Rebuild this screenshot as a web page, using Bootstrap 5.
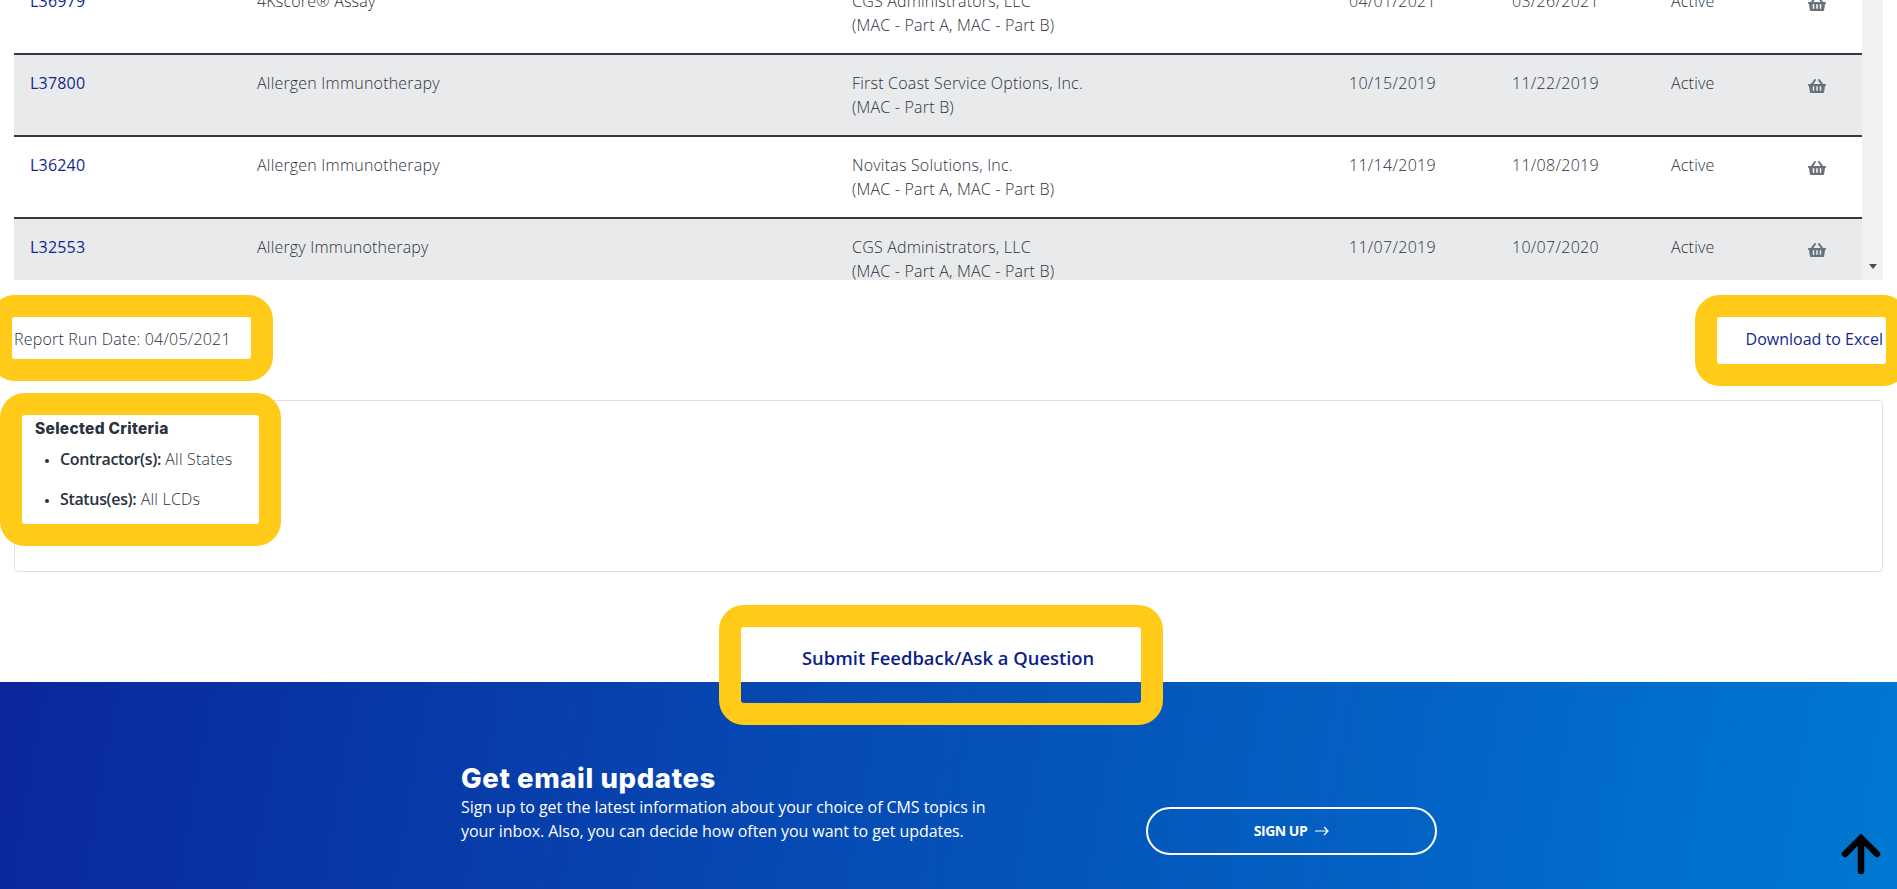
<!DOCTYPE html>
<html lang="en">
<head>
<meta charset="utf-8">
<title>LCD report</title>
<link href="https://cdn.jsdelivr.net/npm/bootstrap@5.3.0/dist/css/bootstrap.min.css" rel="stylesheet">
<style>
html, body { height: 889px; overflow: hidden; }
body { font-family: "Open Sans", "Liberation Sans", sans-serif; font-size: 16px; font-weight: 300; letter-spacing: .2px; line-height: 24px; color: #2b323d; background: #fff; }
a { text-decoration: none; color: #13278f; font-weight: 400; letter-spacing: 0; }
.hl { position: relative; z-index: 2; }
.hl::before { content: ""; position: absolute; inset: -22px; border: 22px solid #ffca18; border-radius: 25px; pointer-events: none; }
.scroll-wrap { height: 280px; margin: 0 14px; overflow: hidden; }
.scroll-body { flex: 1 1 auto; overflow: hidden; }
.rep-table { table-layout: fixed; width: 1848px; margin: -27px 0 0; --bs-table-color: #2b323d; --bs-table-bg: transparent; border-collapse: separate; border-spacing: 0; }
.rep-table td { padding: 16px; border: 0; border-bottom: 2px solid #343a40; line-height: 24px; height: 82px; vertical-align: top; font-weight: 300; }
.rep-table tr.grey td { background: #e9eaec; }
.c1 { width: 227px; } .c2 { width: 595px; } .c3 { width: 497px; } .c4 { width: 163px; } .c5 { width: 159px; } .c6 { width: 137px; } .c7 { width: 70px; }
.rep-table td.nums { letter-spacing: .3px; }
.rep-table td.nums a { letter-spacing: .2px; }
.basket { width: 18px; height: 16px; fill: #68727b; display: block; margin-top: 7px; }
.fake-bar { width: 21px; background: #f1f1f1; }
.fake-arrow { width: 0; height: 0; border-left: 4px solid transparent; border-right: 4px solid transparent; border-top: 5px solid #4d4a50; margin-bottom: 11px; }
.run-row { margin: 37px 11px 0 12px; height: 47px; }
.run-date { width: 239px; height: 42px; padding: 10px 2px; }
.dl-box { width: 169px; height: 47px; padding: 10px 3px 0 0; text-align: right; }
.crit-card { margin: 36px 14px 0 14px; height: 172px; border: 1px solid #dfe0e2; border-radius: 4px; padding: 14px 0 0 7px; }
.crit-box { width: 237px; height: 109px; padding: 2px 0 0 13px; }
.crit-title { font-weight: 800; font-size: 15.5px; letter-spacing: .3px; line-height: 24px; color: #2b3240; font-family: "Inter", sans-serif; }
.crit-list { margin: 6px 0 0; padding-left: 25px; }
.crit-list li { line-height: 24px; margin-bottom: 16px; }
.crit-list li::marker { font-size: 12px; }
.crit-list strong { font-weight: 600; letter-spacing: -.35px; }
.submit-wrap { margin-top: 55px; margin-bottom: -21px; padding-right: 15px; }
.submit-box { width: 400px; height: 76px; padding: 19px 0 0 61px; font-size: 18.4px; font-weight: 600; letter-spacing: 0; color: #0d1f87; line-height: 24px; }
.foot { height: 207px; background: linear-gradient(100deg, #0a279b 0%, #0078d2 100%); color: #fff; position: relative; padding: 79px 0 0 461px; }
.foot-title { font-family: "Inter", sans-serif; font-weight: 800; font-size: 27.5px; letter-spacing: .6px; line-height: 34px; margin: 0; }
.foot-text { width: 535px; margin: 0; color: #fff; font-weight: 400; letter-spacing: -.07px; }
.signup { width: 291px; height: 48px; margin-left: 150px; margin-bottom: -12px; border: 2px solid #fff; border-radius: 24px; color: #fff; font-size: 14px; font-weight: 700; letter-spacing: -.5px; }
.signup:hover { color: #fff; }
.to-top { position: absolute; right: 14px; bottom: 13px; width: 42px; height: 43px; }
</style>
</head>
<body>
<div class="scroll-wrap d-flex">
  <div class="scroll-body">
    <table class="table rep-table">
      <colgroup><col class="c1"><col class="c2"><col class="c3"><col class="c4"><col class="c5"><col class="c6"><col class="c7"></colgroup>
      <tbody>
        <tr><td class="nums"><a href="#">L36979</a></td><td>4Kscore® Assay</td><td>CGS Administrators, LLC<br>(MAC - Part A, MAC - Part B)</td><td class="nums">04/01/2021</td><td class="nums">03/26/2021</td><td>Active</td><td><svg class="basket" viewBox="0 0 576 512"><use href="#bk"/></svg></td></tr>
        <tr class="grey"><td class="nums"><a href="#">L37800</a></td><td>Allergen Immunotherapy</td><td>First Coast Service Options, Inc.<br>(MAC - Part B)</td><td class="nums">10/15/2019</td><td class="nums">11/22/2019</td><td>Active</td><td><svg class="basket" viewBox="0 0 576 512"><use href="#bk"/></svg></td></tr>
        <tr><td class="nums"><a href="#">L36240</a></td><td>Allergen Immunotherapy</td><td>Novitas Solutions, Inc.<br>(MAC - Part A, MAC - Part B)</td><td class="nums">11/14/2019</td><td class="nums">11/08/2019</td><td>Active</td><td><svg class="basket" viewBox="0 0 576 512"><use href="#bk"/></svg></td></tr>
        <tr class="grey"><td class="nums"><a href="#">L32553</a></td><td>Allergy Immunotherapy</td><td>CGS Administrators, LLC<br>(MAC - Part A, MAC - Part B)</td><td class="nums">11/07/2019</td><td class="nums">10/07/2020</td><td>Active</td><td><svg class="basket" viewBox="0 0 576 512"><use href="#bk"/></svg></td></tr>
      </tbody>
    </table>
  </div>
  <div class="fake-bar d-flex flex-column justify-content-end align-items-center"><div class="fake-arrow"></div></div>
</div>

<svg width="0" height="0" class="position-absolute"><defs><path id="bk" d="M576 216v16c0 13.255-10.745 24-24 24h-8l-26.113 182.788C514.509 462.435 494.257 480 470.37 480H105.63c-23.887 0-44.139-17.565-47.518-41.212L32 256h-8c-13.255 0-24-10.745-24-24v-16c0-13.255 10.745-24 24-24h67.341l106.78-146.821c10.395-14.292 30.407-17.453 44.701-7.058 14.293 10.395 17.453 30.408 7.058 44.701L170.477 192h235.046L326.12 82.821c-10.395-14.292-7.234-34.306 7.059-44.701 14.291-10.395 34.306-7.235 44.701 7.058L484.659 192H552c13.255 0 24 10.745 24 24zM312 392V280c0-13.255-10.745-24-24-24s-24 10.745-24 24v112c0 13.255 10.745 24 24 24s24-10.745 24-24zm112 0V280c0-13.255-10.745-24-24-24s-24 10.745-24 24v112c0 13.255 10.745 24 24 24s24-10.745 24-24zm-224 0V280c0-13.255-10.745-24-24-24s-24 10.745-24 24v112c0 13.255 10.745 24 24 24s24-10.745 24-24z"/></defs></svg>

<div class="run-row d-flex justify-content-between align-items-start">
  <div class="run-date hl">Report Run Date: 04/05/2021</div>
  <div class="dl-box hl"><a href="#">Download to Excel</a></div>
</div>

<div class="crit-card">
  <div class="crit-box hl">
    <div class="crit-title">Selected Criteria</div>
    <ul class="crit-list">
      <li><strong>Contractor(s):</strong> All States</li>
      <li><strong>Status(es):</strong> All LCDs</li>
    </ul>
  </div>
</div>

<div class="submit-wrap d-flex justify-content-center position-relative">
  <div class="submit-box hl">Submit Feedback/Ask a Question</div>
</div>

<footer class="foot">
  <div class="d-flex align-items-end">
    <div>
      <h2 class="foot-title">Get email updates</h2>
      <p class="foot-text">Sign up to get the latest information about your choice of CMS topics in your inbox. Also, you can decide how often you want to get updates.</p>
    </div>
    <a class="signup d-flex align-items-center justify-content-center gap-2" href="#">SIGN UP
      <svg width="14" height="10" viewBox="0 0 14 10" fill="none" stroke="#fff" stroke-width="1.2"><path d="M0 5h13M9 1l4 4-4 4"/></svg></a>
  </div>
  <svg class="to-top" viewBox="0 0 42 43" fill="none" stroke="#000" stroke-width="6.5" stroke-linecap="round" stroke-linejoin="miter"><path d="M20 38V6M4 21 20 5l16 16"/></svg>
</footer>
</body>
</html>
